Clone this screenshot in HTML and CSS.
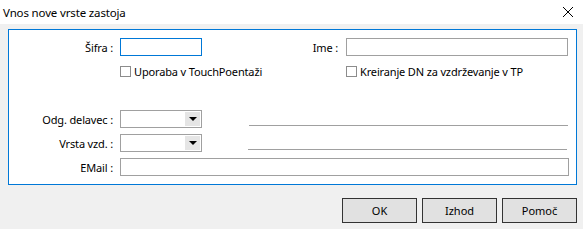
FILE: index.html
```html
<!DOCTYPE html>
<html lang="sl">
<head>
    <meta charset="UTF-8">
    <title>Vnos nove vrste zastoja</title>
    <link rel="stylesheet" href="styles.css">
</head>
<body>
    <div class="window">
        <div class="titlebar">
            <span class="title">Vnos nove vrste zastoja</span>
            <svg class="close" width="12" height="12" viewBox="0 0 12 12">
                <path d="M1 1 L11 11 M11 1 L1 11" stroke="#000" stroke-width="1" fill="none"/>
            </svg>
        </div>

        <div class="panel">
            <div class="row row-top">
                <label class="lbl">Šifra :</label>
                <input class="field field-code focused" type="text">
                <label class="lbl lbl-name">Ime :</label>
                <input class="field field-grow" type="text">
            </div>

            <div class="row row-checks">
                <label class="check check-first"><span class="box"></span>Uporaba v TouchPoentaži</label>
                <label class="check"><span class="box"></span>Kreiranje DN za vzdrževanje v TP</label>
            </div>

            <div class="row row-combo row-worker">
                <label class="lbl">Odg. delavec :</label>
                <div class="combo"><span class="combo-btn"><span class="arrow"></span></span></div>
                <div class="underline"></div>
            </div>

            <div class="row row-combo row-type">
                <label class="lbl">Vrsta vzd. :</label>
                <div class="combo"><span class="combo-btn"><span class="arrow"></span></span></div>
                <div class="underline"></div>
            </div>

            <div class="row row-combo row-mail">
                <label class="lbl">EMail :</label>
                <input class="field field-grow" type="text">
            </div>
        </div>

        <div class="buttons">
            <button class="btn">OK</button>
            <button class="btn">Izhod</button>
            <button class="btn">Pomoč</button>
        </div>
    </div>
</body>
</html>
```

FILE: styles.css
```css
* {
    box-sizing: border-box;
}
body {
    margin: 0;
    font-family: "Noto Sans", "Open Sans", sans-serif;
    font-size: 11px;
    letter-spacing: -0.15px;
    color: #000;
    background: #f0f0f0;
}
.window {
    width: 583px;
    height: 229px;
    background: #f0f0f0;
}
.titlebar {
    height: 24px;
    background: #fff;
    display: flex;
    align-items: center;
    justify-content: space-between;
    padding: 0 9px 0 3px;
}
.title {
    font-size: 11.5px;
}
.close {
    display: block;
}
.panel {
    margin: 5px 6px 0 8px;
    height: 156px;
    border: 1px solid #0078d7;
    background: #fff;
    padding: 8px 8px 0 0;
}
.row {
    display: flex;
    align-items: center;
    height: 18px;
}
.lbl {
    width: 104px;
    text-align: right;
    margin-right: 7px;
    white-space: nowrap;
}
.lbl-name {
    width: 136px;
    margin-right: 8px;
}
.field {
    height: 18px;
    border: 1px solid #a0a0a0;
    background: #fff;
    font: inherit;
    padding: 0 3px;
    outline: none;
}
.field-code {
    width: 82px;
}
.focused {
    border-color: #0078d7;
}
.field-grow {
    flex: 1;
    min-width: 0;
}
.row-checks {
    height: 13px;
    margin-top: 9px;
    padding-left: 111px;
}
.check {
    display: flex;
    align-items: center;
    white-space: nowrap;
}
.check-first {
    width: 226px;
}
.box {
    width: 11px;
    height: 11px;
    border: 1px solid #8c8c8c;
    background: #fff;
    margin-right: 3px;
}
.row-worker {
    margin-top: 32px;
}
.row-type,
.row-mail {
    margin-top: 6px;
}
.row-mail .field {
    margin-right: -1px;
}
.combo {
    width: 82px;
    height: 18px;
    border: 1px solid #a0a0a0;
    background: #fff;
    display: flex;
    justify-content: flex-end;
    padding: 1px;
}
.combo-btn {
    width: 15px;
    height: 14px;
    background: #e5e5e5;
    display: flex;
    align-items: center;
    justify-content: center;
}
.arrow {
    width: 0;
    height: 0;
    border-left: 4px solid transparent;
    border-right: 4px solid transparent;
    border-top: 4px solid #000;
}
.underline {
    flex: 1;
    height: 1px;
    background: #a0a0a0;
    align-self: flex-start;
    margin-top: 15px;
    margin-left: 47px;
}
.row-type .underline {
    margin-left: 46px;
    margin-right: 1px;
}
.buttons {
    display: flex;
    justify-content: flex-end;
    gap: 5px;
    margin-top: 13px;
    padding-right: 6px;
}
.btn {
    width: 75px;
    height: 25px;
    border: 1px solid #333;
    background: #e1e1e1;
    font: inherit;
    color: #000;
    padding: 0;
}
```
